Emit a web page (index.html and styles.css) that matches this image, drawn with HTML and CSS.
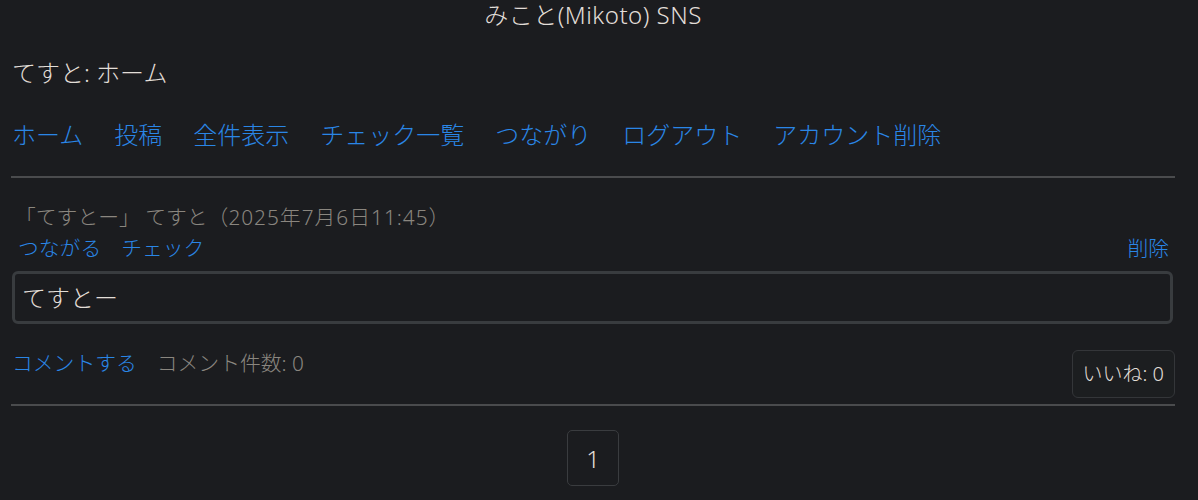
FILE: index.html
```html
<!DOCTYPE html>
<html lang="ja">
<head>
  <meta charset="UTF-8">
  <meta name="viewport" content="width=device-width, initial-scale=1.0">
  <title>みこと(Mikoto) SNS</title>
  <link rel="stylesheet" href="styles.css">
</head>
<body>
  <div class="page">
    <h1 class="site-title">みこと(Mikoto) SNS</h1>
    <h2 class="page-title">てすと: ホーム</h2>

    <nav class="nav">
      <a href="#">ホーム</a>
      <a href="#">投稿</a>
      <a href="#">全件表示</a>
      <a href="#">チェック一覧</a>
      <a href="#">つながり</a>
      <a href="#">ログアウト</a>
      <a href="#">アカウント削除</a>
    </nav>

    <hr class="rule">

    <div class="post">
      <div class="post-meta">「てすとー」 てすと（<span class="date">2025年7月6日11:45</span>）</div>
      <div class="post-actions">
        <div class="left">
          <a href="#">つながる</a>
          <a href="#">チェック</a>
        </div>
        <a href="#">削除</a>
      </div>
      <div class="post-body">てすとー</div>
      <div class="post-footer">
        <div class="left">
          <a href="#">コメントする</a>
          <span class="count">コメント件数: 0</span>
        </div>
        <button class="like">いいね: 0</button>
      </div>
    </div>

    <hr class="rule rule-end">

    <div class="pager">
      <span class="page-no">1</span>
    </div>
  </div>
</body>
</html>
```

FILE: styles.css
```css
body {
  margin: 0;
  background-color: #1b1c1f;
  color: #e2ded8;
  font-family: "Noto Sans", "Noto Sans CJK JP", sans-serif;
  font-weight: 300;
}
.page {
  width: 1164px;
  margin-left: 11px;
}
a {
  color: #2a86e6;
  text-decoration: none;
}
.site-title {
  margin: 0;
  text-align: center;
  font-size: 24px;
  font-weight: 300;
  line-height: 30px;
  letter-spacing: 0.5px;
}
.page-title {
  margin: 28px 0 0 1px;
  font-size: 24px;
  font-weight: 300;
  line-height: 30px;
}
.nav {
  display: flex;
  gap: 31px;
  margin: 32px 0 0 1px;
  font-size: 24px;
  line-height: 30px;
}
.rule {
  border: none;
  height: 2px;
  background-color: #4a4b4d;
  margin: 26px 0 0;
}
.post {
  padding-top: 25px;
}
.post-meta {
  margin-left: 4px;
  color: #8a867f;
  font-size: 20.8px;
  line-height: 28px;
}
.date {
  letter-spacing: 1px;
}
.post-actions, .post-footer {
  display: flex;
  justify-content: space-between;
  align-items: flex-start;
}
.post-actions {
  margin: 3px 6px 0 7px;
  font-size: 20.8px;
  line-height: 28px;
}
.left {
  display: flex;
  gap: 20px;
}
.post-body {
  margin: 9px 2px 0 1px;
  padding: 8px 7px;
  border: 3px solid #393c3f;
  border-radius: 6px;
  font-size: 24px;
  line-height: 31px;
}
.post-footer {
  margin: 25px 0 0 1px;
  font-size: 20.8px;
  line-height: 28px;
}
.count {
  color: #8a867f;
}
.like {
  margin-top: 1px;
  padding: 9px 10px;
  background-color: #1c1e20;
  color: #e2ded8;
  border: 1px solid #343639;
  border-radius: 6px;
  font-family: inherit;
  font-weight: 300;
  font-size: 20px;
  line-height: 28px;
}
.rule-end {
  margin-top: 6px;
}
.pager {
  display: flex;
  justify-content: center;
  padding-top: 24px;
}
.page-no {
  width: 50px;
  height: 54px;
  display: flex;
  align-items: center;
  justify-content: center;
  border: 1px solid #3a3c3f;
  border-radius: 5px;
  font-size: 24px;
}
```
